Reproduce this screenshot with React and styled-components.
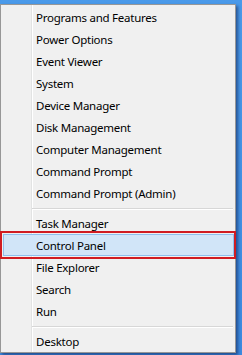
import React from "react";
import styled, { createGlobalStyle } from "styled-components";

const Global = createGlobalStyle`
  html, body { margin: 0; padding: 0; }
  body {
    background: #3f8fe6;
    width: 242px;
    height: 355px;
    overflow: hidden;
    font-family: "Noto Sans", "Open Sans", sans-serif;
  }
`;

const Desktop = styled.div`
  display: flex;
  align-items: flex-start;
  width: 242px;
  height: 355px;
  padding-top: 4px;
  box-sizing: border-box;
  background: linear-gradient(#4a9aea, #3c8ae0);
`;

const Menu = styled.div`
  position: relative;
  width: 236px;
  box-sizing: border-box;
  border: 1px solid #979797;
  padding: 1px 0 0;
  background-color: #f0f0f0;
  background-image: linear-gradient(90deg, transparent 30px, #e2e3e3 30px, #e2e3e3 31px, #ffffff 31px, #ffffff 32px, transparent 32px);
  box-shadow: 2px 2px 3px rgba(0, 0, 40, 0.45);
  display: flex;
  flex-direction: column;
`;

const Item = styled.div`
  position: relative;
  height: 22px;
  box-sizing: border-box;
  margin: 0 1px 0 2px;
  padding-left: 32px;
  display: flex;
  align-items: center;
  font-size: 11.5px;
  letter-spacing: -0.25px;
  color: #000;
  white-space: nowrap;
  border: 1px solid ${(p) => (p.$active ? "#8fbfee" : "transparent")};
  background: ${(p) => (p.$active ? "#d1e5f8" : "transparent")};
`;

const Separator = styled.div`
  height: 8px;
  display: flex;
  align-items: center;
  padding-left: 31px;
  margin-right: 2px;
  &::after {
    content: "";
    flex: 1;
    height: 1px;
    background: #d7d7d7;
    box-shadow: 0 1px 0 #ffffff;
  }
`;

const Highlight = styled.div`
  position: absolute;
  top: -4px;
  bottom: -4px;
  left: -4px;
  right: -3px;
  border: 2px solid #d01c22;
  pointer-events: none;
`;

const groups = [
  [
    "Programs and Features",
    "Power Options",
    "Event Viewer",
    "System",
    "Device Manager",
    "Disk Management",
    "Computer Management",
    "Command Prompt",
    "Command Prompt (Admin)",
  ],
  ["Task Manager", "Control Panel", "File Explorer", "Search", "Run"],
  ["Desktop"],
];

export default function App() {
  return (
    <>
      <Global />
      <Desktop>
        <Menu>
          {groups.map((g, gi) => (
            <React.Fragment key={gi}>
              {gi > 0 && <Separator />}
              {g.map((label) => {
                const active = label === "Control Panel";
                return (
                  <Item key={label} $active={active}>
                    {label}
                    {active && <Highlight />}
                  </Item>
                );
              })}
            </React.Fragment>
          ))}
        </Menu>
      </Desktop>
    </>
  );
}
